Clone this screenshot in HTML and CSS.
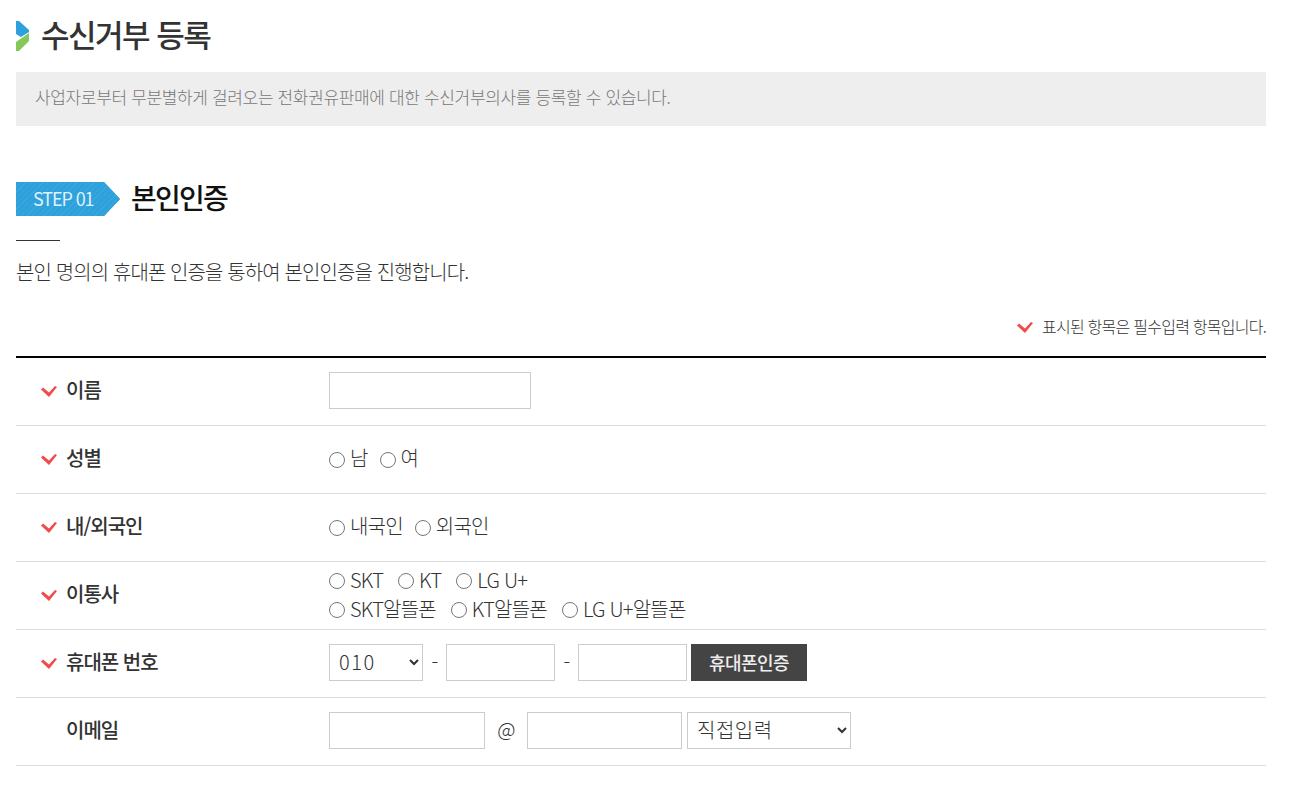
FILE: index.html
```html
<!DOCTYPE html>
<html lang="ko">
<head>
    <meta charset="UTF-8">
    <title>수신거부 등록</title>
    <link rel="stylesheet" href="styles.css">
</head>
<body>
    <div class="wrap">
        <!-- Page title -->
        <h1 class="page-title">
            <svg class="title-icon" width="14" height="30" viewBox="0 0 14 30">
                <polygon points="0,0 3,0 13,9 13,11 5,16 0,13" fill="#2ea1dc"/>
                <polygon points="13,12 13,20 3,30 0,30 0,21" fill="#86c75c"/>
            </svg>
            수신거부 등록
        </h1>
        <p class="notice">사업자로부터 무분별하게 걸려오는 전화권유판매에 대한 수신거부의사를 등록할 수 있습니다.</p>

        <!-- Step heading -->
        <div class="step-head">
            <span class="step-badge">STEP 01</span>
            <h2>본인인증</h2>
        </div>
        <div class="short-line"></div>
        <p class="step-desc">본인 명의의 휴대폰 인증을 통하여 본인인증을 진행합니다.</p>

        <p class="required-note">
            <svg class="check" width="16" height="11" viewBox="0 0 16 11"><path d="M0 3.5 L2 1.5 L8 6.5 L14 0 L16 1 L8 11 Z" fill="#f04a4a"/></svg>
            표시된 항목은 필수입력 항목입니다.
        </p>

        <!-- Form -->
        <form class="form-table">
            <div class="row">
                <div class="label">
                    <svg class="check" width="16" height="11" viewBox="0 0 16 11"><path d="M0 3.5 L2 1.5 L8 6.5 L14 0 L16 1 L8 11 Z" fill="#f04a4a"/></svg>
                    이름
                </div>
                <div class="field"><input type="text" class="w-name"></div>
            </div>
            <div class="row">
                <div class="label">
                    <svg class="check" width="16" height="11" viewBox="0 0 16 11"><path d="M0 3.5 L2 1.5 L8 6.5 L14 0 L16 1 L8 11 Z" fill="#f04a4a"/></svg>
                    성별
                </div>
                <div class="field">
                    <label class="radio"><input type="radio" name="sex">남</label>
                    <label class="radio"><input type="radio" name="sex">여</label>
                </div>
            </div>
            <div class="row">
                <div class="label">
                    <svg class="check" width="16" height="11" viewBox="0 0 16 11"><path d="M0 3.5 L2 1.5 L8 6.5 L14 0 L16 1 L8 11 Z" fill="#f04a4a"/></svg>
                    내/외국인
                </div>
                <div class="field">
                    <label class="radio"><input type="radio" name="nation">내국인</label>
                    <label class="radio"><input type="radio" name="nation">외국인</label>
                </div>
            </div>
            <div class="row">
                <div class="label">
                    <svg class="check" width="16" height="11" viewBox="0 0 16 11"><path d="M0 3.5 L2 1.5 L8 6.5 L14 0 L16 1 L8 11 Z" fill="#f04a4a"/></svg>
                    이통사
                </div>
                <div class="field carriers">
                    <div class="carrier-line">
                        <label class="radio"><input type="radio" name="telecom">SKT</label>
                        <label class="radio"><input type="radio" name="telecom">KT</label>
                        <label class="radio"><input type="radio" name="telecom">LG U+</label>
                    </div>
                    <div class="carrier-line">
                        <label class="radio"><input type="radio" name="telecom">SKT알뜰폰</label>
                        <label class="radio"><input type="radio" name="telecom">KT알뜰폰</label>
                        <label class="radio"><input type="radio" name="telecom">LG U+알뜰폰</label>
                    </div>
                </div>
            </div>
            <div class="row">
                <div class="label">
                    <svg class="check" width="16" height="11" viewBox="0 0 16 11"><path d="M0 3.5 L2 1.5 L8 6.5 L14 0 L16 1 L8 11 Z" fill="#f04a4a"/></svg>
                    휴대폰 번호
                </div>
                <div class="field">
                    <select class="w-tel"><option>010</option></select>
                    <span class="dash">-</span>
                    <input type="text" class="w-phone">
                    <span class="dash">-</span>
                    <input type="text" class="w-phone">
                    <button type="button" class="btn-auth">휴대폰인증</button>
                </div>
            </div>
            <div class="row">
                <div class="label no-check">이메일</div>
                <div class="field">
                    <input type="text" class="w-mail1">
                    <span class="at">@</span>
                    <input type="text" class="w-mail2">
                    <select class="w-domain"><option>직접입력</option></select>
                </div>
            </div>
        </form>
    </div>
</body>
</html>
```

FILE: styles.css
```css
/* General styling */
* {
    margin: 0;
    padding: 0;
    box-sizing: border-box;
}
body {
    font-family: "Noto Sans CJK KR", "Noto Sans", sans-serif;
    color: #333;
    background-color: #fff;
}
.wrap {
    width: 1250px;
    margin-left: 16px;
}

/* Page title */
.page-title {
    display: flex;
    align-items: center;
    gap: 11px;
    height: 72px;
    padding-bottom: 6px;
    font-size: 31px;
    font-weight: 500;
    letter-spacing: -1.5px;
    color: #333;
}
.title-icon {
    flex: none;
    margin-top: 6px;
}
.notice {
    height: 54px;
    padding-left: 19px;
    line-height: 49px;
    font-size: 17px;
    font-weight: 300;
    color: #777;
    background-color: #eee;
    letter-spacing: -0.35px;
}

/* Step heading */
.step-head {
    display: flex;
    align-items: center;
    gap: 11px;
    margin-top: 56px;
    height: 34px;
}
.step-badge {
    width: 104px;
    height: 34px;
    padding-left: 17px;
    line-height: 33px;
    font-size: 18px;
    letter-spacing: -1.1px;
    color: #dff1fb;
    background-color: #2ea1dc;
    background-image: repeating-linear-gradient(135deg, #2ea1dc 0, #2ea1dc 3px, #3aa7df 3px, #3aa7df 4px);
    clip-path: polygon(0 0, 88px 0, 104px 17px, 88px 34px, 0 34px);
}
.step-head h2 {
    padding-bottom: 5px;
    font-size: 28px;
    font-weight: 500;
    letter-spacing: -1.75px;
    color: #111;
}
.short-line {
    width: 44px;
    height: 1px;
    margin-top: 24px;
    background-color: #333;
}
.step-desc {
    margin-top: 16px;
    line-height: 30px;
    font-size: 20px;
    font-weight: 300;
    letter-spacing: -0.9px;
    color: #333;
}
.required-note {
    display: flex;
    justify-content: flex-end;
    align-items: center;
    gap: 9px;
    margin-top: 27px;
    height: 24px;
    font-size: 16px;
    font-weight: 300;
    letter-spacing: -0.75px;
    color: #333;
}

/* Form table */
.form-table {
    margin-top: 18px;
    border-top: 2px solid #000;
}
.row {
    display: flex;
    align-items: center;
    height: 68px;
    padding-bottom: 2px;
    border-bottom: 1px solid #ddd;
}
.label {
    display: flex;
    align-items: center;
    gap: 9px;
    width: 313px;
    padding-left: 25px;
    padding-bottom: 2px;
    font-size: 20px;
    font-weight: 500;
    letter-spacing: -1px;
    color: #333;
}
.label.no-check {
    padding-left: 50px;
}
.check {
    flex: none;
    margin-top: 2px;
}
.label .check {
    margin-top: 4px;
}
.field {
    display: flex;
    align-items: center;
    font-size: 20px;
    font-weight: 300;
    letter-spacing: -0.8px;
}
.field input[type="text"],
.field select {
    height: 37px;
    border: 1px solid #ccc;
    background-color: #fff;
    font-family: inherit;
    border-radius: 0;
}
.field select {
    padding-left: 5px;
    padding-bottom: 2px;
    font-size: 20px;
    font-weight: 300;
    letter-spacing: 0.5px;
    color: #333;
}
.field .w-tel {
    letter-spacing: 1.5px;
}
.radio {
    display: flex;
    align-items: center;
    margin-right: 12px;
    padding-bottom: 2px;
}
.radio input {
    width: 16px;
    height: 16px;
    margin: 4px 5px 0 0;
}
.carriers {
    display: block;
}
.carrier-line {
    display: flex;
    height: 29px;
    align-items: center;
}
.carrier-line .radio {
    margin-right: 15px;
}
.w-name { width: 202px; }
.w-tel { width: 94px; }
.w-phone { width: 109px; }
.w-mail1 { width: 156px; }
.w-mail2 { width: 155px; }
.w-domain { width: 164px; margin-left: 5px; }
.dash {
    width: 23px;
    padding-bottom: 2px;
    text-align: center;
}
.at {
    width: 42px;
    padding-bottom: 4px;
    text-align: center;
    font-size: 20px;
}
.btn-auth {
    width: 116px;
    height: 37px;
    margin-left: 4px;
    padding-bottom: 2px;
    border: none;
    background-color: #444;
    color: #eee;
    font-family: inherit;
    font-size: 18px;
    font-weight: 500;
    letter-spacing: -0.6px;
}
```
